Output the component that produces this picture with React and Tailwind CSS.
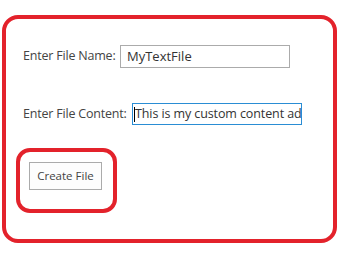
import React from "react";

const font = { fontFamily: '"Open Sans", "Noto Sans", sans-serif' };

const App = () => {
  return (
    <div className="h-[255px] w-[350px] bg-white pl-[2px] pt-[15px] text-[#444444]" style={font}>
      <div className="flex h-[228px] w-[335px] flex-col rounded-[16px] border-4 border-[#e3222b] pl-[17px] pt-[26px]">
        <div className="flex h-[23px] items-center">
          <span className="w-[97px] shrink-0 whitespace-nowrap text-[12.5px] tracking-[-0.2px] text-[#444444]">
            Enter File Name:
          </span>
          <div className="flex h-[23px] w-[170px] shrink-0 items-center border border-[#ababab] px-[6px] text-[13px] text-[#333333]">
            MyTextFile
          </div>
        </div>

        <div className="mt-[35px] flex h-[22px] items-center">
          <span className="w-[109px] shrink-0 whitespace-nowrap text-[12.5px] tracking-[-0.2px] text-[#444444]">
            Enter File Content:
          </span>
          <div className="relative flex h-[22px] w-[170px] shrink-0 items-center overflow-hidden whitespace-nowrap border border-[#2a8dd4] pl-[2px] text-[12.5px] tracking-[-0.1px] text-[#333333]">
            <span className="absolute left-[1px] top-[3px] h-[15px] w-px bg-black" />
            This is my custom content ad
          </div>
        </div>

        <div className="ml-[-7px] mt-[23px] h-[65px] w-[101px] rounded-[14px] border-4 border-[#e3222b] pl-[9px] pt-[10px]">
          <button className="h-[28px] w-[73px] whitespace-nowrap border border-[#ababab] bg-[#fdfdfd] text-[11.5px] text-[#444444]">
            Create File
          </button>
        </div>
      </div>
    </div>
  );
};

export default App;
